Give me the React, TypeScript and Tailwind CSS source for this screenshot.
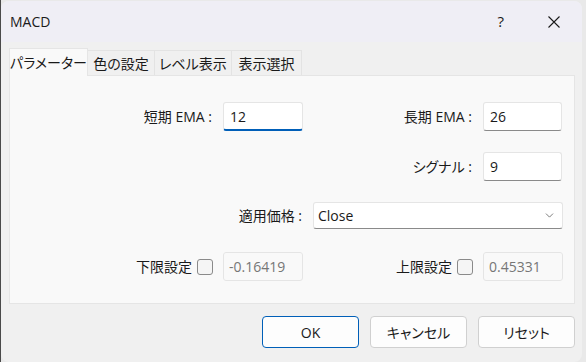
import { ChevronDown } from 'lucide-react'

const TABS = ['パラメーター', '色の設定', 'レベル表示', '表示選択']

function TextBox({ value, focused = false, w = 'w-[80px]' }: { value: string; focused?: boolean; w?: string }) {
  return (
    <div
      className={`${w} h-[29px] bg-white border border-[#e5e5e5] rounded-[3px] flex items-center pl-[6px] text-[14px] text-[#1a1a1a] ${
        focused ? 'border-b-2 border-b-[#005fb8]' : 'border-b-[#8a8a8a]'
      }`}
    >
      {value}
    </div>
  )
}

function DisabledBox({ value }: { value: string }) {
  return (
    <div className="w-[80px] h-[29px] bg-[#f9f9f9] border border-[#e5e5e5] rounded-[3px] flex items-center pl-[5px] text-[14px] text-[#767676]">
      {value}
    </div>
  )
}

function CheckBox() {
  return <div className="w-[16px] h-[16px] rounded-[3px] border border-[#8a8a8a] bg-[#f5f5f5]" />
}

export default function App() {
  return (
    <div className="w-[586px] h-[362px] bg-[#e9e9e9] border-l border-[#4a4a4a] font-[family-name:'Open_Sans','Noto_Sans_CJK_JP',sans-serif] [font-feature-settings:'palt'] text-[#1a1a1a] overflow-hidden">
      <div className="w-[581px] h-[361px] mt-px rounded-lg bg-[#f0f0f0] flex flex-col overflow-hidden">
        {/* Title bar */}
        <div className="h-[41px] bg-[#efeef5] flex items-center pl-[9px] pr-[22px] text-[14px]">
          <span>MACD</span>
          <span className="ml-auto text-[15px] mr-[44px]">?</span>
          <svg width="12" height="12" viewBox="0 0 12 12" className="stroke-[#1a1a1a]">
            <path d="M0.5 0.5 L11.5 11.5 M11.5 0.5 L0.5 11.5" strokeWidth="1.1" />
          </svg>
        </div>

        {/* Tabs */}
        <div className="flex items-end pl-[8px] mt-[6px] relative z-10 whitespace-nowrap">
          {TABS.map((tab, i) =>
            i === 0 ? (
              <div
                key={tab}
                className="w-[79px] h-[28px] -mb-px bg-[#f9f9f9] border border-b-0 border-[#e5e5e5] flex items-center justify-center text-[14px]"
              >
                {tab}
              </div>
            ) : (
              <div
                key={tab}
                className={`${i === 2 ? 'w-[77px]' : i === 1 ? 'w-[67px]' : 'w-[70px]'} h-[25px] bg-[#f0f0f0] border border-l-0 border-b-0 border-[#e3e3e3] flex items-center justify-center text-[14px]`}
              >
                {tab}
              </div>
            )
          )}
        </div>

        {/* Panel */}
        <div className="ml-[8px] w-[566px] h-[229px] bg-[#f9f9f9] border border-[#e5e5e5] flex flex-col pt-[26px] gap-[21px] text-[14px] whitespace-nowrap">
          <div className="flex items-center h-[29px]">
            <div className="w-[204px] text-right pr-[2px]">短期 EMA :</div>
            <div className="ml-[9px]">
              <TextBox value="12" focused />
            </div>
            <div className="w-[171px] text-right pr-[2px]">長期 EMA :</div>
            <div className="ml-[9px]">
              <TextBox value="26" w="w-[79px]" />
            </div>
          </div>

          <div className="flex items-center h-[29px]">
            <div className="w-[464px] text-right pr-[2px]">シグナル :</div>
            <div className="ml-[9px]">
              <TextBox value="9" w="w-[79px]" />
            </div>
          </div>

          <div className="flex items-start h-[29px]">
            <div className="w-[294px] h-[27px] flex items-center justify-end pr-[2px]">適用価格 :</div>
            <div className="ml-[9px] w-[250px] h-[27px] bg-white border border-[#e5e5e5] border-b-[#8a8a8a] rounded-[3px] flex items-center pl-[4px] pr-[6px]">
              <span>Close</span>
              <ChevronDown className="ml-auto w-[13px] h-[13px] text-[#555]" strokeWidth={1.4} />
            </div>
          </div>

          <div className="flex items-center h-[29px]">
            <div className="w-[182px] text-right">下限設定</div>
            <div className="ml-[5px]">
              <CheckBox />
            </div>
            <div className="ml-[10px]">
              <DisabledBox value="-0.16419" />
            </div>
            <div className="w-[149px] text-right">上限設定</div>
            <div className="ml-[5px]">
              <CheckBox />
            </div>
            <div className="ml-[10px]">
              <DisabledBox value="0.45331" />
            </div>
          </div>
        </div>

        {/* Buttons */}
        <div className="flex justify-end gap-[11px] pr-[7px] mt-[12px] text-[14px]">
          <button className="w-[97px] h-[32px] bg-[#fdfdfd] border border-[#005fb8] rounded-[4px]">OK</button>
          <button className="w-[97px] h-[32px] bg-[#fdfdfd] border border-[#d0d0d0] rounded-[4px]">キャンセル</button>
          <button className="w-[97px] h-[32px] bg-[#fdfdfd] border border-[#d0d0d0] rounded-[4px]">リセット</button>
        </div>
      </div>
    </div>
  )
}
